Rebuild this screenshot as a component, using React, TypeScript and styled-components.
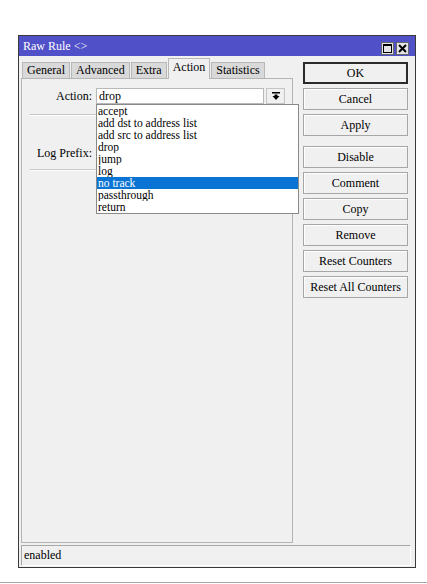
import React from "react";
import styled, { createGlobalStyle, css } from "styled-components";

const GlobalStyle = createGlobalStyle`
  html, body { margin: 0; padding: 0; background: #ffffff; }
  body { font-family: "Liberation Serif", "Times New Roman", serif; font-size: 12px; color: #000; }
  * { box-sizing: border-box; }
`;

const Page = styled.div`
  width: 427px;
  height: 584px;
  padding-top: 35px;
  overflow: hidden;
`;

const Window = styled.div`
  margin-left: 18px;
  width: 398px;
  height: 533px;
  border: 1px solid #3a3a3a;
  background: #f0f0f0;
  display: flex;
  flex-direction: column;
`;

const TitleBar = styled.div`
  height: 20px;
  background: #5050c8;
  color: #ffffff;
  display: flex;
  align-items: center;
  justify-content: space-between;
  padding: 0 6px 0 4px;
  font-size: 12px;
  flex-shrink: 0;
`;

const TitleButtons = styled.div`
  display: flex;
  gap: 2px;
  margin-top: 4px;
`;

const TitleButton = styled.div`
  width: 13px;
  height: 13px;
  background: #e4e4e4;
  border: 1px solid #6a6a6a;
  display: flex;
  align-items: center;
  justify-content: center;
`;

const Body = styled.div`
  flex: 1;
  display: flex;
  padding: 6px 0 0 2px;
  min-height: 0;
`;

const LeftCol = styled.div`
  width: 272px;
  display: flex;
  flex-direction: column;
`;

const TabBar = styled.div`
  display: flex;
  align-items: flex-end;
  height: 16px;
  padding-left: 1px;
  gap: 1px;
  position: relative;
  z-index: 1;
`;

const Tab = styled.div<{ $active?: boolean }>`
  height: 16px;
  padding: 0 4px;
  line-height: 15px;
  background: #d9d9d9;
  border: 1px solid #b8b8b8;
  border-bottom: none;
  white-space: nowrap;
  ${(p) =>
    p.$active &&
    css`
      height: 21px;
      margin-bottom: -1px;
      line-height: 17px;
      background: #f0f0f0;
      padding-bottom: 4px;
    `}
`;

const Panel = styled.div`
  flex: 1;
  border: 1px solid #b4b4b4;
  background: #f0f0f0;
  position: relative;
  display: flex;
  flex-direction: column;
`;

const FieldRow = styled.div<{ $top: number }>`
  display: flex;
  align-items: center;
  height: 16px;
  margin-top: ${(p) => p.$top}px;
`;

const Label = styled.div`
  width: 70px;
  text-align: right;
  margin-right: 4px;
  white-space: nowrap;
`;

const TextField = styled.div<{ $width: number }>`
  width: ${(p) => p.$width}px;
  height: 16px;
  background: #ffffff;
  border: 1px solid #b8b8b8;
  padding-left: 2px;
  line-height: 14px;
`;

const DropButton = styled.div`
  width: 19px;
  height: 16px;
  margin-left: 2px;
  background: #f0f0f0;
  border: 1px solid #c4c4c4;
  display: flex;
  align-items: center;
  justify-content: center;
`;

const Separator = styled.div<{ $top: number }>`
  height: 1px;
  background: #c6c6c6;
  margin: ${(p) => p.$top}px 7px 0 8px;
  box-shadow: 0 1px 0 #ffffff;
`;

const DropList = styled.div`
  position: absolute;
  left: 74px;
  top: 25px;
  width: 203px;
  background: #ffffff;
  border: 1px solid #8a8a8a;
  z-index: 5;
`;

const DropItem = styled.div<{ $selected?: boolean }>`
  height: 12px;
  line-height: 12px;
  font-size: 11.5px;
  padding-left: 1px;
  white-space: nowrap;
  overflow: hidden;
  ${(p) =>
    p.$selected &&
    css`
      background: #0a74d4;
      color: #ffffff;
    `}
`;

const RightCol = styled.div`
  width: 105px;
  margin-left: 10px;
  display: flex;
  flex-direction: column;
  gap: 4px;
`;

const Button = styled.div<{ $default?: boolean; $gapBefore?: number }>`
  height: 22px;
  border: 1px solid #a6a6a6;
  box-shadow: inset 1px 1px 0 #ffffff;
  background: #f0f0f0;
  display: flex;
  align-items: center;
  justify-content: center;
  white-space: nowrap;
  margin-top: ${(p) => p.$gapBefore ?? 0}px;
  ${(p) =>
    p.$default &&
    css`
      border: 2px solid #2a2a2a;
      box-shadow: none;
    `}
`;

const StatusBar = styled.div`
  height: 21px;
  margin: 2px 4px 1px 2px;
  border-top: 1px solid #a8a8a8;
  border-left: 1px solid #a8a8a8;
  border-right: 1px solid #ffffff;
  border-bottom: 1px solid #ffffff;
  padding-left: 2px;
  line-height: 19px;
  flex-shrink: 0;
`;

const BottomRule = styled.div`
  margin-top: 14px;
  height: 1px;
  background: #a6a6a6;
`;

const MaxIcon = () => (
  <svg width="9" height="9" viewBox="0 0 9 9">
    <rect x="0.5" y="0.5" width="8" height="8" fill="none" stroke="#000" strokeWidth="1" />
    <rect x="0" y="0" width="9" height="2" fill="#000" />
  </svg>
);

const CloseIcon = () => (
  <svg width="9" height="9" viewBox="0 0 9 9">
    <path d="M1 1 L8 8 M8 1 L1 8" stroke="#000" strokeWidth="2" />
  </svg>
);

const DropArrow = () => (
  <svg width="8" height="8" viewBox="0 0 8 8">
    <rect x="0" y="0" width="8" height="1.5" fill="#000" />
    <path d="M2.5 2.5 H5.5 V4 H7.5 L4 8 L0.5 4 H2.5 Z" fill="#000" />
  </svg>
);

const tabs = ["General", "Advanced", "Extra", "Action", "Statistics"];
const options = [
  "accept",
  "add dst to address list",
  "add src to address list",
  "drop",
  "jump",
  "log",
  "no track",
  "passthrough",
  "return",
];
const buttons: { label: string; isDefault?: boolean; gap?: number }[] = [
  { label: "OK", isDefault: true },
  { label: "Cancel" },
  { label: "Apply" },
  { label: "Disable", gap: 6 },
  { label: "Comment" },
  { label: "Copy" },
  { label: "Remove" },
  { label: "Reset Counters" },
  { label: "Reset All Counters" },
];

export default function App() {
  return (
    <>
      <GlobalStyle />
      <Page>
        <Window>
          <TitleBar>
            <span>Raw Rule &lt;&gt;</span>
            <TitleButtons>
              <TitleButton>
                <MaxIcon />
              </TitleButton>
              <TitleButton>
                <CloseIcon />
              </TitleButton>
            </TitleButtons>
          </TitleBar>
          <Body>
            <LeftCol>
              <TabBar>
                {tabs.map((t) => (
                  <Tab key={t} $active={t === "Action"}>
                    {t}
                  </Tab>
                ))}
              </TabBar>
              <Panel>
                <FieldRow $top={9}>
                  <Label>Action:</Label>
                  <TextField $width={168}>drop</TextField>
                  <DropButton>
                    <DropArrow />
                  </DropButton>
                </FieldRow>
                <Separator $top={10} />
                <FieldRow $top={30}>
                  <Label>Log Prefix:</Label>
                  <TextField $width={189} />
                </FieldRow>
                <Separator $top={8} />
                <DropList>
                  {options.map((o) => (
                    <DropItem key={o} $selected={o === "no track"}>
                      {o}
                    </DropItem>
                  ))}
                </DropList>
              </Panel>
            </LeftCol>
            <RightCol>
              {buttons.map((b) => (
                <Button key={b.label} $default={b.isDefault} $gapBefore={b.gap}>
                  {b.label}
                </Button>
              ))}
            </RightCol>
          </Body>
          <StatusBar>enabled</StatusBar>
        </Window>
        <BottomRule />
      </Page>
    </>
  );
}
